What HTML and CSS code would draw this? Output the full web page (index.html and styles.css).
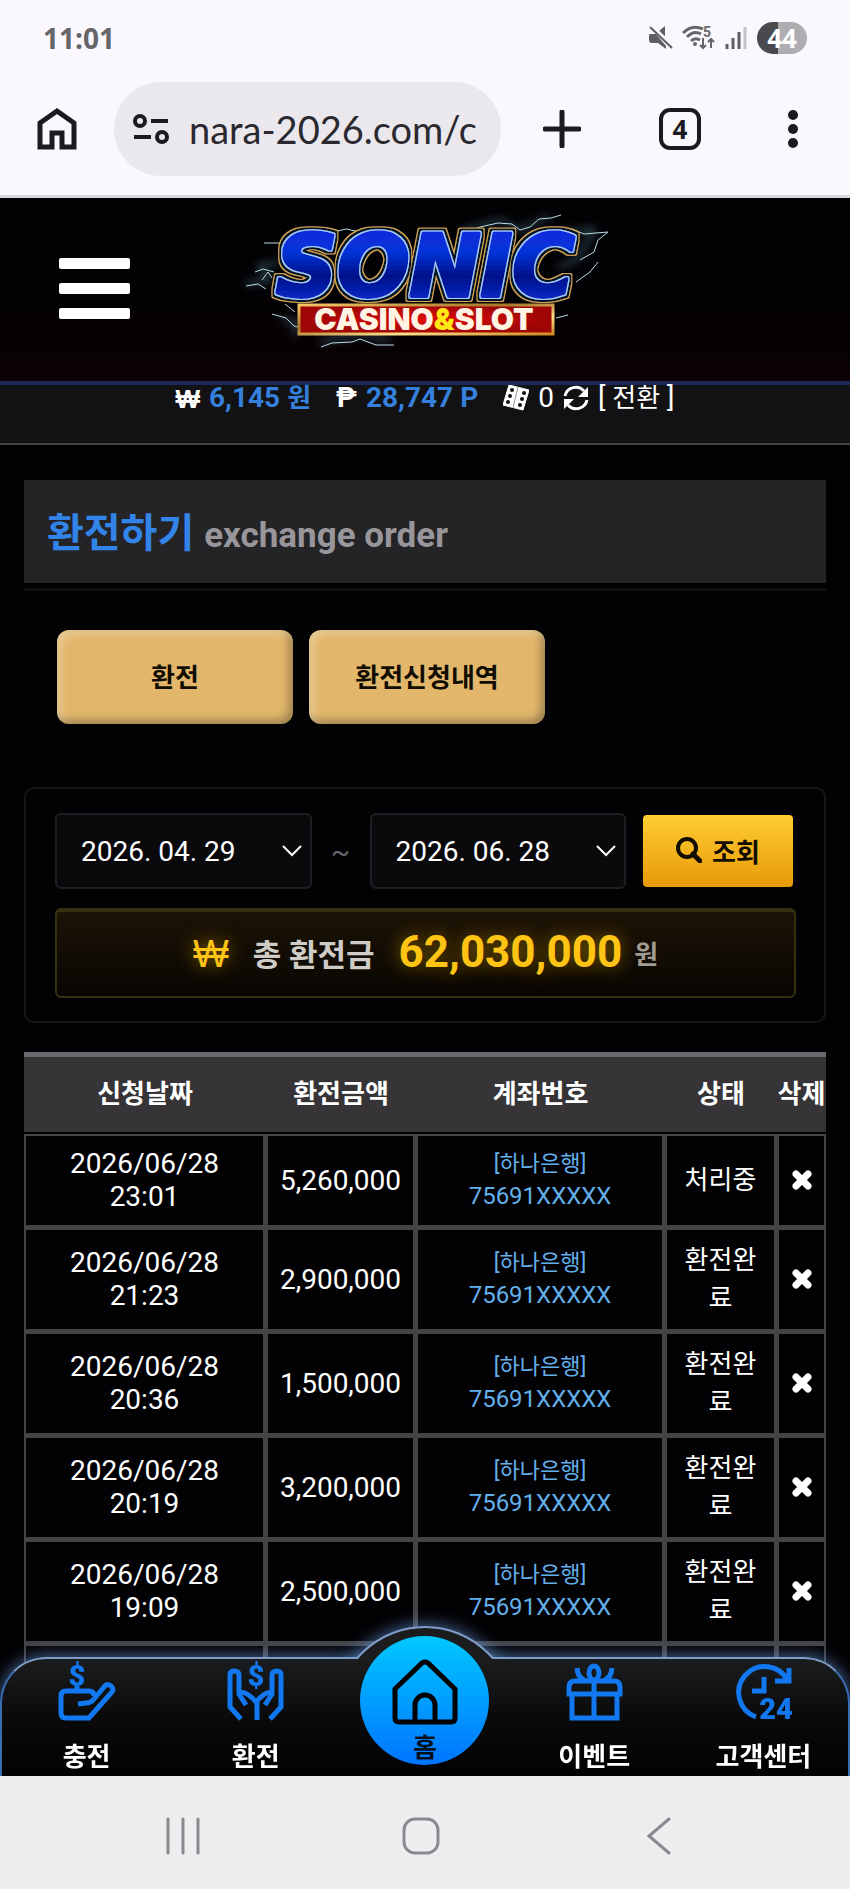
FILE: index.html
```html
<!DOCTYPE html>
<html lang="ko">
<head>
  <meta charset="UTF-8">
  <meta name="viewport" content="width=device-width, initial-scale=1.0">
  <title>환전하기</title>
  <link rel="stylesheet" href="styles.css">
</head>
<body>

  <!-- phone status + browser bar -->
  <div class="browser-top">
    <div class="status-bar">
      <span class="clock">11:01</span>
      <div class="status-icons">
        <svg width="24" height="26" viewBox="0 0 24 26">
          <path d="M1 9h6l10 12v3l-8-6H3q-3 0-3-3v-5zM10 6l6-5v12z" fill="#5f5e62"/>
          <path d="M3 1l21 20" stroke="#faf8fd" stroke-width="3"/>
          <path d="M1 2l22 21" stroke="#5f5e62" stroke-width="2"/>
        </svg>
        <svg width="34" height="26" viewBox="0 0 34 26">
          <g fill="none" stroke="#66656a" stroke-width="3">
            <path d="M1 8Q10-1 21 4"/>
            <path d="M5 12q7-7 14-3"/>
            <path d="M9 16q4-4 9-1"/>
          </g>
          <circle cx="13" cy="19" r="2" fill="#66656a"/>
          <path d="M21 13v10m-3-3l3 3 3-3M29 23V14m-3 3l3-3 3 3" fill="none" stroke="#66656a" stroke-width="2"/>
          <text x="21" y="12" class="wifi-number">5</text>
        </svg>
        <svg width="23" height="26" viewBox="0 0 23 26">
          <path d="M2 19v5M8 13v11M14 7v17" stroke="#5f5e62" stroke-width="3"/>
          <path d="M20 2v22" stroke="#c4c3c7" stroke-width="3"/>
        </svg>
        <span class="battery">44</span>
      </div>
    </div>

    <div class="toolbar">
      <button class="tool" aria-label="Home">
        <svg width="40" height="44" viewBox="0 0 40 44"><path d="M3 40V16L20 4l17 12v24H25V26H15v14z" fill="none" stroke="#1b1a20" stroke-width="5"/></svg>
      </button>
      <div class="address">
        <svg width="36" height="30" viewBox="0 0 36 30" fill="none" stroke="#1b1a20" stroke-width="4">
          <circle cx="7" cy="7" r="5"/><path d="M18 7h17M1 23h17"/><circle cx="29" cy="23" r="5"/>
        </svg>
        <input type="text" aria-label="Address" value="nara-2026.com/c">
      </div>
      <div class="tools">
        <button class="tool" aria-label="New tab">
          <svg width="38" height="38" viewBox="0 0 38 38"><path d="M19 2v34M2 19h34" stroke="#1b1a20" stroke-width="5" stroke-linecap="round"/></svg>
        </button>
        <button class="tool tab-count" aria-label="Tabs">4</button>
        <button class="tool" aria-label="Menu">
          <svg width="28" height="38" viewBox="0 0 28 38" fill="#1b1a20"><circle cx="14" cy="5" r="5"/><circle cx="14" cy="19" r="5"/><circle cx="14" cy="33" r="5"/></svg>
        </button>
      </div>
    </div>
  </div>

  <header class="site-header">
    <button class="menu-button" aria-label="메뉴"><span></span><span></span><span></span></button>
    <a href="#" class="logo" aria-label="SONIC CASINO&amp;SLOT">
      <svg width="370" height="150" viewBox="0 0 370 150">
        <defs>
          <linearGradient id="blue" x1="0" y1="0" x2="0" y2="1">
            <stop offset="0" stop-color="#0a22e0"/><stop offset=".35" stop-color="#0634d8"/>
            <stop offset=".6" stop-color="#04108a"/><stop offset="1" stop-color="#0a3cf0"/>
          </linearGradient>
          <linearGradient id="gold" x1="0" y1="0" x2="1" y2="1">
            <stop offset="0" stop-color="#f6c765"/><stop offset=".4" stop-color="#a8752c"/>
            <stop offset=".7" stop-color="#ffe08a"/><stop offset="1" stop-color="#d08a20"/>
          </linearGradient>
          <radialGradient id="red">
            <stop offset="0" stop-color="#e00c08"/><stop offset="1" stop-color="#9e0505"/>
          </radialGradient>
          <filter id="glow" x="-20%" y="-20%" width="140%" height="140%"><feGaussianBlur stdDeviation="4"/></filter>
          <!-- light blue edge, dark band and gold rim round the letters -->
          <filter id="rims" x="-10%" y="-20%" width="120%" height="140%">
            <feMorphology in="SourceAlpha" operator="dilate" radius="1" result="a"/>
            <feMorphology in="SourceAlpha" operator="dilate" radius="3" result="b"/>
            <feMorphology in="SourceAlpha" operator="dilate" radius="4" result="c"/>
            <feFlood flood-color="#a9ceff"/><feComposite in2="a" operator="in" result="light"/>
            <feFlood flood-color="#06182c"/><feComposite in2="b" operator="in" result="dark"/>
            <feFlood flood-color="#d6a653"/><feComposite in2="c" operator="in" result="rim"/>
            <feMerge><feMergeNode in="rim"/><feMergeNode in="dark"/><feMergeNode in="light"/><feMergeNode in="SourceGraphic"/></feMerge>
          </filter>
        </defs>
        <g fill="none" stroke="#6fa8c8" stroke-width="3" opacity=".6" filter="url(#glow)">
          <path d="M5 84l24-4-10-14 20-4M42 118l16 6-4 12M80 142l40-8 30 6M220 32l40-12 20 10 30-14M320 32l34-2-16 28-20 10"/>
        </g>
        <g fill="none" stroke="#b9dde6" stroke-width="1">
          <path d="M6 86l12-2 8 5M15 72l8-3 11 3M22 80l6-8 4 6M24 43l20 0M94 32l12-3 14 3 7-1M32 114l14 4 8 8 7 2M45 104l10 8"/>
          <path d="M81 147l11-4 20-1 8-3 16 6 18 0M222 34l18-7 18-4 14 1 8 6 10-3 9-8 12-1 10-3"/>
          <path d="M320 33l12-4 12 5 24-2-10 8-4 12-14 8M358 62l-8 10-14 10M316 118l12-3"/>
        </g>
        <text x="36" y="96" class="logo-name" filter="url(#rims)">SONIC</text>
        <rect x="59" y="105" width="254" height="29" fill="url(#red)" stroke="url(#gold)" stroke-width="3"/>
        <text x="184" y="130" class="logo-sub">CASINO<tspan fill="#ffe714">&amp;</tspan>SLOT</text>
      </svg>
    </a>
  </header>

  <div class="wallet">
    <span class="wallet-item"><b class="won">₩</b> <strong>6,145 <span class="ko">원</span></strong></span>
    <span class="wallet-item"><b>₱</b> <strong>28,747 P</strong></span>
    <span class="wallet-item">
      <svg width="26" height="26" viewBox="0 0 26 26">
        <path d="M6 0l20 5-6 20L0 20z" fill="#fff" stroke="#fff" stroke-linejoin="round"/>
        <path d="M15 2L10 23" stroke="#999"/>
        <g fill="#111"><circle cx="9" cy="5" r="2"/><circle cx="7" cy="11" r="2"/><circle cx="5" cy="17" r="2"/><circle cx="21" cy="8" r="2"/><circle cx="19" cy="14" r="2"/><circle cx="17" cy="20" r="2"/></g>
      </svg>
      0
      <svg width="26" height="26" viewBox="0 0 26 26">
        <path d="M2 11A11 11 0 0 1 21 6M24 15A11 11 0 0 1 5 20" fill="none" stroke="#fff" stroke-width="3"/>
        <path d="M25 2v10H15zM1 24V14h10z" fill="#fff"/>
      </svg>
      <a href="#">[ <span class="ko">전환</span> ]</a>
    </span>
  </div>

  <main class="content">
    <h1 class="page-title">환전하기 <small>exchange order</small></h1>

    <div class="tabs">
      <button class="tab">환전</button>
      <button class="tab">환전신청내역</button>
    </div>

    <form class="search-box">
      <div class="search-row">
        <div class="date">
          <select aria-label="시작일"><option>2026. 04. 29</option></select>
          <svg width="20" height="12" viewBox="0 0 20 12"><path d="M1 1l9 9 9-9" fill="none" stroke="#fff" stroke-width="2"/></svg>
        </div>
        <span class="tilde">~</span>
        <div class="date">
          <select aria-label="종료일"><option>2026. 06. 28</option></select>
          <svg width="20" height="12" viewBox="0 0 20 12"><path d="M1 1l9 9 9-9" fill="none" stroke="#fff" stroke-width="2"/></svg>
        </div>
        <button type="button" class="search-button">
          <svg width="26" height="26" viewBox="0 0 26 26" fill="none" stroke="#120d02" stroke-width="4"><circle cx="11" cy="11" r="9"/><path d="M17 17l7 7" stroke-width="5" stroke-linecap="round"/></svg>
          조회
        </button>
      </div>
      <div class="total">
        <span class="total-won">₩</span>
        <span class="total-label">총 환전금</span>
        <span class="total-amount">62,030,000</span>
        <span class="total-unit">원</span>
      </div>
    </form>

    <table class="orders">
      <colgroup><col class="col-date"><col class="col-money"><col><col class="col-state"><col class="col-delete"></colgroup>
      <thead>
        <tr><th>신청날짜</th><th>환전금액</th><th>계좌번호</th><th>상태</th><th>삭제</th></tr>
      </thead>
      <tbody id="orderRows"></tbody>
    </table>
  </main>

  <div class="bottom">
    <nav class="dock">
      <span class="bump"></span>
      <a href="#">
        <svg width="57" height="57" viewBox="0 0 57 57">
          <path d="M36 33q0-5-5-5H8q-5 0-5 5v17q0 5 5 5h23L53 30q4-4 0-7-4-3-7 1L36 36q-3 4-8 4l-8 1M19 23v5"/>
          <text x="19" y="23">$</text>
        </svg>
        충전
      </a>
      <a href="#">
        <svg width="57" height="57" viewBox="0 0 57 57">
          <path d="M14 56L3 44V12q0-4 4-4 5 0 5 4v19l7 11M43 56l11-12V12q0-4-4-4-5 0-5 4v19l-7 11M13 30q6-3 16 9 10-12 16-9M30 38v19"/>
          <text x="29" y="23">$</text>
        </svg>
        환전
      </a>
      <a href="#" class="home">
        <svg width="66" height="66" viewBox="0 0 66 66"><path d="M23 63V46a10 10 0 0 1 20 0v17M7 63h52q4 0 4-4V30L36 4q-3-2-6 0L3 30v29q0 4 4 4z"/></svg>
        홈
      </a>
      <a href="#">
        <svg width="57" height="57" viewBox="0 0 57 57">
          <path d="M3 31V24q0-6 6-6h39q6 0 6 6v7zM6 31v24h45V31M28 18v37M11 5q1 12 11 13M46 5q-1 12-11 13"/>
          <ellipse cx="28" cy="10" rx="5" ry="7"/>
        </svg>
        이벤트
      </a>
      <a href="#">
        <svg width="57" height="57" viewBox="0 0 57 57">
          <path d="M21 54A26 26 0 1 1 53 18M54 5v13H40M29 14v14H17"/>
          <text x="41" y="56">24</text>
        </svg>
        고객센터
      </a>
    </nav>
    <div class="android-nav">
      <button aria-label="Recent apps"><svg width="34" height="38" viewBox="0 0 34 38"><path d="M2 2v34M17 2v34M32 2v34"/></svg></button>
      <button aria-label="Home screen"><svg width="38" height="38" viewBox="0 0 38 38"><rect x="2" y="2" width="34" height="34" rx="11"/></svg></button>
      <button aria-label="Back"><svg width="24" height="38" viewBox="0 0 24 38"><path d="M22 2L2 19l20 17"/></svg></button>
    </div>
  </div>

  <script>
    const orders = [
      ["2026/06/28", "23:01", "5,260,000", "처리중"],
      ["2026/06/28", "21:23", "2,900,000", "환전완료"],
      ["2026/06/28", "20:36", "1,500,000", "환전완료"],
      ["2026/06/28", "20:19", "3,200,000", "환전완료"],
      ["2026/06/28", "19:09", "2,500,000", "환전완료"]
    ];
    const cross = '<svg width="20" height="20" viewBox="0 0 20 20"><path d="M4 4l12 12M16 4L4 16" stroke="#fff" stroke-width="7" stroke-linecap="round"/></svg>';

    let rows = "";
    orders.forEach(([day, time, amount, state]) => {
      rows += `<tr>
        <td>${day}<br>${time}</td>
        <td>${amount}</td>
        <td class="account"><span class="bank">[하나은행]</span><br>75691XXXXX</td>
        <td class="state">${state}</td>
        <td><button class="delete" aria-label="삭제">${cross}</button></td>
      </tr>`;
    });
    // next row, still empty behind the dock
    rows += '<tr class="next"><td></td><td></td><td></td><td></td><td></td></tr>';
    document.getElementById("orderRows").innerHTML = rows;
  </script>
</body>
</html>
```
FILE: styles.css
```css
* {
  box-sizing: border-box;
}

body {
  margin: 0;
  min-height: 100vh;
  background-color: #020103;
  color: #fff;
  font-family: Roboto, "Noto Sans CJK KR", sans-serif;
  font-size: 28px;
}

button,
select,
input {
  font-family: inherit;
  border: none;
  margin: 0;
  padding: 0;
}

button {
  background: none;
  cursor: pointer;
}

a {
  color: inherit;
  text-decoration: none;
}

svg {
  display: block;
}

.ko {
  font-size: 26px;
}

/* browser bar */
.browser-top {
  background-color: #faf8fd;
  color: #1b1a20;
  border-bottom: 3px solid #d9d7dc;
}

.status-bar {
  display: flex;
  justify-content: space-between;
  align-items: center;
  height: 76px;
  padding: 0 43px;
}

.clock {
  font-family: "Open Sans", sans-serif;
  font-size: 28px;
  font-weight: 700;
  color: #66656a;
}

.status-icons {
  display: flex;
  align-items: center;
  gap: 9px;
}

.wifi-number {
  font-size: 14px;
  font-weight: 700;
  fill: #66656a;
}

.battery {
  width: 50px;
  border-radius: 16px;
  background: linear-gradient(90deg, #4a494d 42%, #aeadb1 42%);
  color: #fff;
  font-family: "Open Sans", sans-serif;
  font-size: 26px;
  font-weight: 700;
  line-height: 32px;
  text-align: center;
}

.toolbar {
  display: flex;
  align-items: center;
  height: 119px;
  padding: 0 43px 14px 37px;
}

.tool {
  display: flex;
  align-items: center;
  justify-content: center;
}

.address {
  flex: 1;
  display: flex;
  align-items: center;
  gap: 20px;
  min-width: 0;
  height: 94px;
  margin: 0 42px 0 37px;
  padding: 0 16px 0 19px;
  border-radius: 47px;
  background-color: #eae8ed;
}

.address svg {
  flex: none;
}

.address input {
  flex: 1;
  min-width: 0;
  background: none;
  color: #2a292f;
  font-family: Lato, sans-serif;
  font-size: 38px;
}

.tools {
  display: flex;
  align-items: center;
  gap: 78px;
}

.tab-count {
  width: 42px;
  height: 42px;
  border: 4px solid #1b1a20;
  border-radius: 11px;
  color: #1b1a20;
  font-family: "Open Sans", sans-serif;
  font-size: 26px;
  font-weight: 700;
}

/* site header */
.site-header {
  display: grid;
  grid-template-columns: 1fr auto 1fr;
  align-items: center;
  height: 187px;
  padding: 2px 59px 4px;
  border-bottom: 4px solid #1b2859;
  background: linear-gradient(#020103 50%, #0b0103);
}

.menu-button {
  display: flex;
  flex-direction: column;
  gap: 14px;
  width: 71px;
}

.menu-button span {
  width: 100%;
  height: 11px;
  border-radius: 2px;
  background-color: #fff;
}

.logo {
  align-self: start;
}

.logo-name {
  font-family: "DejaVu Sans", sans-serif;
  font-size: 85px;
  font-weight: 700;
  font-style: italic;
  fill: url(#blue);
  stroke: url(#blue);
  stroke-width: 4px;
  stroke-linejoin: round;
}

.logo-sub {
  font-family: Inter, sans-serif;
  font-size: 30px;
  font-weight: 900;
  fill: #fff3e4;
  text-anchor: middle;
}

.wallet {
  display: flex;
  justify-content: center;
  gap: 25px;
  padding-bottom: 32px;
  border-bottom: 2px solid #444346;
  background-color: #121214;
  line-height: 24px;
}

.wallet-item {
  display: flex;
  align-items: center;
  gap: 9px;
}

.wallet strong {
  color: #3480dc;
}

.won {
  font-family: "Open Sans", sans-serif;
  font-size: 26px;
}

/* content */
.content {
  padding: 35px 24px 120px;
}

.page-title {
  margin: 0;
  padding: 27px 23px 21px;
  background-color: #242326;
  box-shadow: 0 5px #020103, 0 8px #111013;
  color: #3384e8;
  font-size: 40px;
  line-height: 53px;
}

.page-title small {
  color: #98969b;
  font-size: 35px;
}

.tabs {
  display: flex;
  gap: 16px;
  padding: 47px 33px 63px;
}

.tab {
  width: 236px;
  height: 94px;
  padding-bottom: 4px;
  border-radius: 12px;
  background-color: #e2b76c;
  box-shadow: inset 4px 4px 8px rgba(255, 255, 255, 0.3), inset -4px -4px 8px rgba(0, 0, 0, 0.3);
  color: #120d02;
  font-size: 26px;
  font-weight: 700;
}

.search-box {
  padding: 24px 28px 23px 29px;
  border: 2px solid #161518;
  border-radius: 10px;
}

.search-row {
  display: flex;
  align-items: center;
  margin-bottom: 19px;
}

.date {
  position: relative;
  flex: 1;
}

.date select {
  appearance: none;
  width: 100%;
  height: 76px;
  padding: 0 24px;
  border: 2px solid #1f1e22;
  border-radius: 6px;
  background-color: #0a090c;
  color: #fff;
  font-size: 28px;
}

.date svg {
  position: absolute;
  top: 32px;
  right: 10px;
  pointer-events: none;
}

.tilde {
  width: 58px;
  color: #66656a;
  text-align: center;
}

.search-button {
  display: flex;
  align-items: center;
  justify-content: center;
  gap: 10px;
  width: 150px;
  height: 72px;
  margin: 0 3px 0 17px;
  padding-bottom: 2px;
  border-radius: 4px;
  background: linear-gradient(#ffcc33, #e89a08);
  color: #120d02;
  font-size: 26px;
  font-weight: 700;
}

.total {
  display: flex;
  align-items: center;
  justify-content: center;
  height: 90px;
  padding-bottom: 4px;
  border: 2px solid #353010;
  border-top-width: 4px;
  border-radius: 6px;
  background: linear-gradient(#1c1306, #080602);
  font-weight: 700;
}

.total-won,
.total-amount {
  color: #ffc414;
  text-shadow: 0 0 18px rgba(255, 190, 0, 0.5);
}

.total-won {
  margin-right: 24px;
  font-family: "Open Sans", sans-serif;
  font-size: 38px;
  font-weight: 500;
}

.total-label {
  margin-right: 24px;
  color: #cfcbc6;
  font-size: 31px;
}

.total-amount {
  margin-right: 12px;
  font-size: 44px;
}

.total-unit {
  color: #a39c92;
  font-size: 26px;
}

/* order table */
.orders {
  width: 100%;
  margin-top: 29px;
  border-collapse: separate;
  border-spacing: 0;
  table-layout: fixed;
  text-align: center;
}

.col-date {
  width: 242px;
}

.col-money {
  width: 150px;
}

.col-state {
  width: 112px;
}

.col-delete {
  width: 49px;
}

.orders th {
  padding: 18px 0;
  border-top: 5px solid #6b696d;
  border-bottom: 2px solid #020103;
  background-color: #363437;
  font-size: 26px;
  line-height: 39px;
  white-space: nowrap;
}

.orders td {
  padding: 11px 0 12px;
  border: solid #444346;
  border-width: 2px 3px 3px 2px;
  line-height: 33px;
}

.orders td:last-child {
  border-right-width: 2px;
}

.orders .account {
  color: #63b0ea;
  font-size: 24px;
  line-height: 33px;
}

.bank {
  font-size: 22px;
}

.orders .state {
  padding-left: 16px;
  padding-right: 16px;
  font-size: 26px;
  line-height: 38px;
  word-break: break-all;
}

.orders .next td {
  height: 104px;
}

.delete {
  display: block;
  margin: 0 auto;
}

/* fixed bottom menus */
.bottom {
  position: fixed;
  left: 0;
  right: 0;
  bottom: 0;
}

.dock {
  position: relative;
  display: grid;
  grid-template-columns: repeat(5, 1fr);
  height: 119px;
  border: 2px solid #3a6cb0;
  border-top-color: #7f9cc8;
  border-bottom: none;
  border-radius: 46px 46px 0 0;
  background: linear-gradient(#1a1c1d, #0a0a0b 50%, #020103);
  box-shadow: 0 -2px 16px rgba(110, 160, 230, 0.6);
}

/* rounded hump behind the home button */
.bump {
  position: absolute;
  left: 50%;
  top: -33px;
  width: 180px;
  height: 180px;
  margin-left: -90px;
  border: 2px solid #7f9cc8;
  border-radius: 50%;
  background-color: #1a1c1d;
  box-shadow: 0 -2px 16px rgba(110, 160, 230, 0.6);
  clip-path: inset(-20px -20px 147px -20px);
}

.dock a {
  position: relative;
  display: flex;
  flex-direction: column;
  align-items: center;
  gap: 20px;
  padding-top: 4px;
  font-size: 26px;
  font-weight: 700;
  line-height: 34px;
}

.dock svg {
  overflow: visible;
  fill: none;
  stroke: #1278f0;
  stroke-width: 5px;
}

.dock text {
  fill: #1278f0;
  stroke: none;
  font-family: Roboto, sans-serif;
  font-size: 29px;
  font-weight: 900;
  text-anchor: middle;
}

.dock .home {
  justify-self: center;
  gap: 6px;
  width: 129px;
  height: 129px;
  margin-top: -23px;
  padding-top: 23px;
  border-radius: 50%;
  background: linear-gradient(#00c8ff, #0074ff);
  color: #03101c;
}

.dock .home svg {
  stroke: #020103;
}

.android-nav {
  position: relative;
  display: grid;
  grid-template-columns: repeat(3, 1fr);
  height: 113px;
  padding: 7px 72px 0 64px;
  background-color: #f0edf1;
}

.android-nav button {
  display: flex;
  align-items: center;
  justify-content: center;
}

.android-nav svg {
  fill: none;
  stroke: #8b898e;
  stroke-width: 3px;
  stroke-linecap: round;
}
```
